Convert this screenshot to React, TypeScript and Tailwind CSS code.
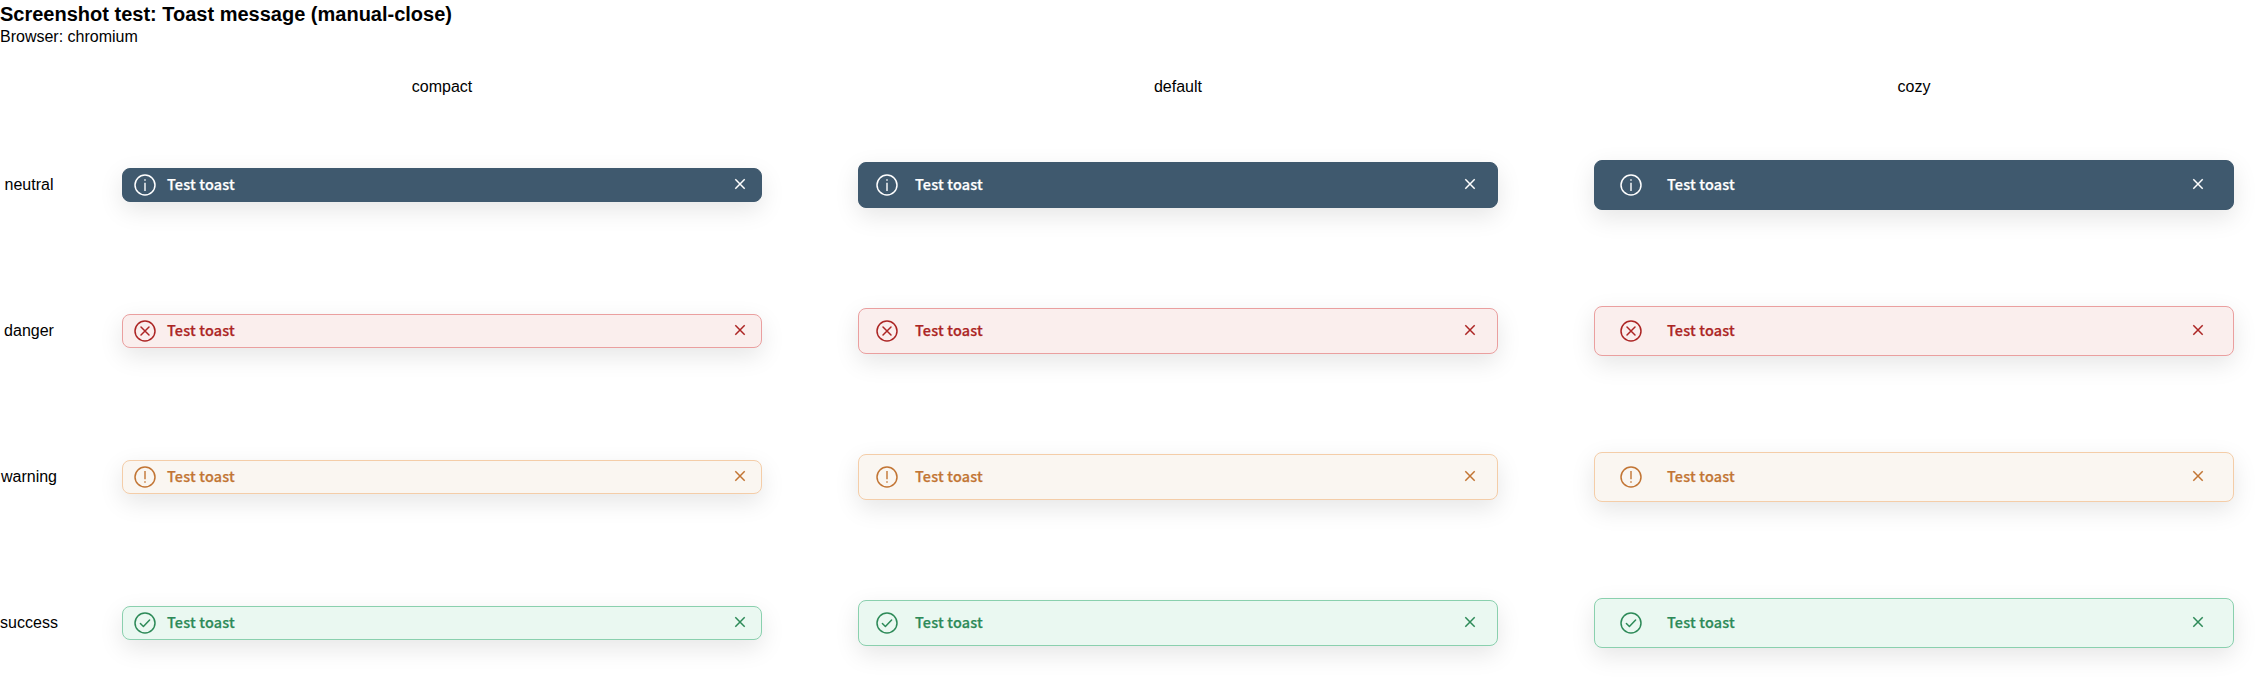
import React from "react";

type Variant = "neutral" | "danger" | "warning" | "success";
type Density = "compact" | "default" | "cozy";

const densities: Density[] = ["compact", "default", "cozy"];
const variants: Variant[] = ["neutral", "danger", "warning", "success"];

const colors: Record<Variant, string> = {
  neutral: "bg-[#3f596e] border-[#3f596e] text-white",
  danger: "bg-[#faeeed] border-[#ea9f9f] text-[#ac2524]",
  warning: "bg-[#faf6f1] border-[#f4cda8] text-[#c27534]",
  success: "bg-[#eaf8f1] border-[#8ad0ae] text-[#2d8a58]",
};

const spacing: Record<Density, string> = {
  compact: "h-[34px] pl-[10px] pr-[9px] gap-[10px]",
  default: "h-[46px] pl-4 pr-[15px] gap-4",
  cozy: "h-[50px] pl-6 pr-[23px] gap-6",
};

function StatusIcon({ variant }: { variant: Variant }) {
  return (
    <svg className="size-6 shrink-0" viewBox="0 0 24 24" fill="none" stroke="currentColor" strokeWidth="1.5" strokeLinecap="round" strokeLinejoin="round">
      <circle cx="12" cy="12" r="10" />
      {variant === "neutral" && (
        <path d="M12 9.8v8.2M12 6.2v1.6" strokeLinecap="butt" strokeWidth="1.4" />
      )}
      {variant === "danger" && <path d="M8 8l8 8M16 8l-8 8" />}
      {variant === "warning" && (
        <path d="M12 6v8.2M12 16.2v1.6" strokeLinecap="butt" strokeWidth="1.4" />
      )}
      {variant === "success" && <path d="M7.4 12.5l3 3 6.2-6.5" />}
    </svg>
  );
}

function Toast({ variant, density }: { variant: Variant; density: Density }) {
  return (
    <div
      className={`flex w-[640px] items-center rounded-lg border shadow-[0_8px_24px_rgba(0,0,0,0.1)] ${colors[variant]} ${spacing[density]}`}
    >
      <StatusIcon variant={variant} />
      <span className="grow pb-0.5 font-['Noto_Sans_CJK_SC',sans-serif] text-[14.4px] leading-6 font-medium tracking-[0.2px] [-webkit-text-stroke:0.25px_currentColor]">
        Test toast
      </span>
      <button type="button" aria-label="Close" className="flex size-6 items-center justify-center">
        <svg className="size-6" viewBox="0 0 24 24" fill="none" stroke="currentColor" strokeWidth="1.5">
          <path d="M7.3 6.3l9.4 9.4M16.7 6.3l-9.4 9.4" />
        </svg>
      </button>
    </div>
  );
}

export default function App() {
  return (
    <main className="h-[680px] w-[2266px] overflow-hidden bg-white font-['Liberation_Sans',sans-serif] text-base leading-[18px] text-black">
      <h1 className="h-7 text-xl leading-7 font-bold">Screenshot test: Toast message (manual-close)</h1>
      <p>Browser: chromium</p>
      <div className="mt-8 grid grid-cols-[58px_704px_704px_704px] gap-8 text-center">
        <span />
        {densities.map((density) => (
          <span key={density}>{density}</span>
        ))}
        {variants.map((variant) => (
          <React.Fragment key={variant}>
            <span className="self-center">{variant}</span>
            {densities.map((density) => (
              <div key={density} className="flex h-[114px] items-center justify-center text-left">
                <Toast variant={variant} density={density} />
              </div>
            ))}
          </React.Fragment>
        ))}
      </div>
    </main>
  );
}
